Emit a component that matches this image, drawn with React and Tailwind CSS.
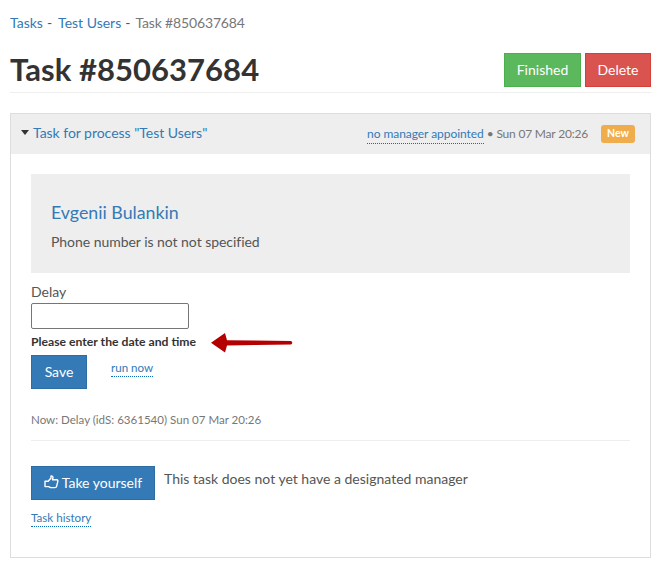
const linkDotted = "text-[#337ab7] border-b border-dotted border-[#0a6ebd]";

// font-awesome 4 style outlined thumb, react-icons version is too chunky here
const ThumbIcon = () => (
  <svg width="15" height="14" viewBox="0 0 15 14" fill="none" stroke="white" strokeWidth="1.4" strokeLinejoin="round">
    <path d="M1 6.2 H4.2 L7 3 V1 Q8.8 0.8 9 2.6 L8.4 4.8 H12.8 Q14.2 5 13.8 6.6 L12.6 11.4 Q12.4 12.6 11 12.6 H6.6 L4.6 11.6 H1 Z" />
  </svg>
);

export default function App() {
  return (
    <div className="relative w-[665px] h-[572px] bg-white pl-[10px] pr-[14px] font-['Lato','Open_Sans',sans-serif] text-[14px] text-[#555] overflow-hidden">
      {/* breadcrumbs */}
      <div className="pt-[14px] h-[35px] leading-[18px] flex">
        <span className="text-[#337ab7]">Tasks</span>
        <span className="ml-[4px]">-</span>
        <span className="text-[#337ab7] ml-[6px]">Test Users</span>
        <span className="ml-[4px]">-</span>
        <span className="text-[#777] ml-[5px] tracking-[-0.15px]">Task #850637684</span>
      </div>

      {/* title */}
      <div className="flex items-start justify-between h-[58px] border-b border-[#eee] pt-[19px]">
        <h1 className="text-[31px] leading-[33px] font-bold text-[#333] tracking-[0.05px] -mt-[1px]">Task #850637684</h1>
        <div className="flex gap-1 -mt-[1px]">
          <button className="h-[34px] w-[77px] bg-[#5cb85c] border border-[#4cae4c] text-white pb-[2px]">Finished</button>
          <button className="h-[34px] w-[66px] bg-[#d9534f] border border-[#d43f3a] text-white pb-[2px]">Delete</button>
        </div>
      </div>

      {/* panel */}
      <div className="mt-5 w-[641px] h-[445px] border border-[#ddd]">
        <div className="h-[40px] bg-[#eee] flex items-center pl-[10px] pr-[15px]">
          <span className="w-0 h-0 border-x-[4.5px] border-x-transparent border-t-[5px] border-t-[#333] mr-[4px] mb-[3px]" />
          <span className="text-[#337ab7] mb-[3px] tracking-[-0.03px]">Task for process "Test Users"</span>
          <span className="ml-auto text-[12px] text-[#777] flex items-center">
            <span className={`${linkDotted} tracking-[-0.05px]`}>no manager appointed</span>
            <span className="ml-[3px] tracking-[-0.2px]">• Sun 07 Mar 20:26</span>
          </span>
          <span className="ml-[13px] h-[18px] w-[34px] rounded-[3px] bg-[#f0ad4e] text-white text-[10.5px] font-bold flex items-center justify-center">New</span>
        </div>

        <div className="px-5 pt-5">
          <div className="h-[99px] bg-[#eee] px-5 pt-[28px]">
            <div className="text-[17.8px] leading-[20px] text-[#337ab7]">Evgenii Bulankin</div>
            <div className="mt-[10px] leading-[20px] tracking-[-0.04px]">Phone number is not not specified</div>
          </div>

          <div className="mt-[9px] h-[21px] leading-[20px]">Delay</div>
          <input className="block w-[158px] h-[26px] border border-[#767676] rounded-[2px] bg-white" />
          <div className="mt-[5px] text-[12.2px] leading-[16px] font-bold text-[#333]">Please enter the date and time</div>

          <div className="mt-[5px] flex items-start">
            <button className="h-[34px] w-[56px] bg-[#337ab7] border border-[#2e6da4] text-white pb-[2px]">Save</button>
            <span className={`ml-[24px] mt-[5px] text-[11.6px] leading-[16px] ${linkDotted}`}>run now</span>
          </div>

          <div className="mt-[23px] text-[11.55px] leading-[16px] text-[#777]">Now: Delay (idS: 6361540) Sun 07 Mar 20:26</div>
          <div className="mt-[12px] border-t border-[#eee]" />

          <div className="mt-[25px] flex items-start">
            <button className="h-[34px] w-[124px] bg-[#337ab7] border border-[#2e6da4] text-white flex items-center justify-center gap-[3px] pb-[2px]">
              <ThumbIcon />
              Take yourself
            </button>
            <span className="ml-[9px] leading-[20px] mt-[3px]">This task does not yet have a designated manager</span>
          </div>
          <div className="mt-[10px] leading-[16px] flex">
            <span className={`text-[11.6px] ${linkDotted}`}>Task history</span>
          </div>
        </div>
      </div>

      {/* annotation arrow */}
      <svg className="absolute left-[210px] top-[331px]" width="84" height="23" viewBox="0 0 84 23">
        <path d="M1 11.7 L15 2 L17 9.2 L45 9.5 L81 10 Q83.5 11.7 81 13.5 L45 14 L17 14.5 L15 21.5 Z" fill="#b40000" />
      </svg>
    </div>
  );
}
